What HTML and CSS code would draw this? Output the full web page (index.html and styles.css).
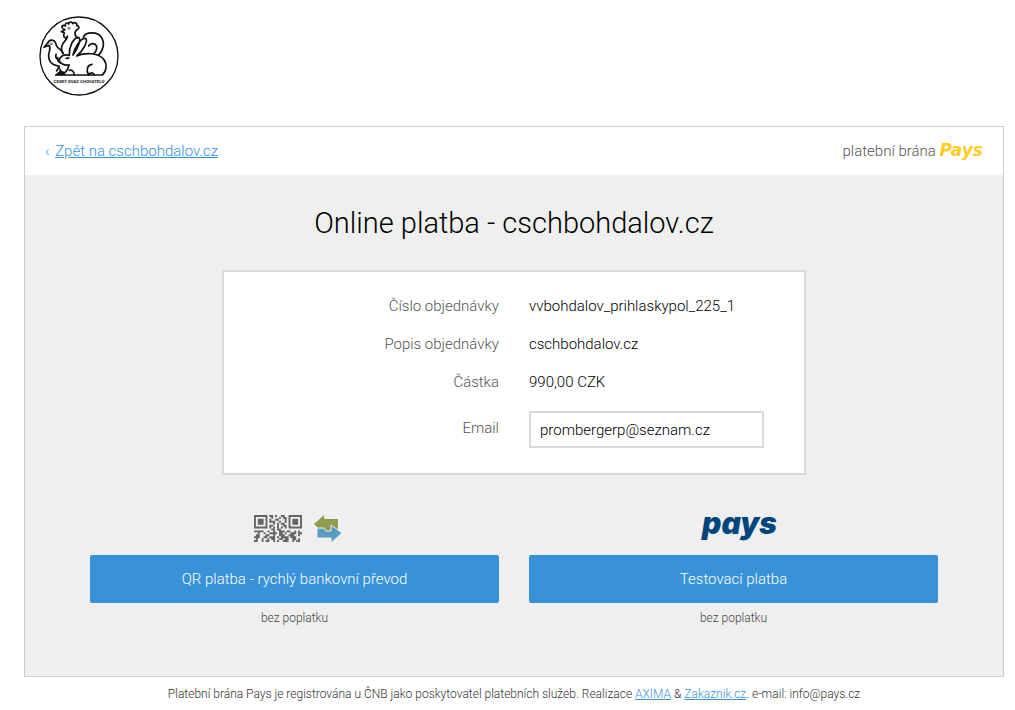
FILE: index.html
```html
<!DOCTYPE html>
<html lang="cs">

	<head>
		<meta charset="utf-8">
		<title>Online platba - cschbohdalov.cz</title>
		<link rel="stylesheet" href="styles.css">
	</head>

	<body>

		<header class="header">
			<svg class="logo" viewBox="27 24 240 240" role="img" aria-label="Český svaz chovatelů">
				<circle cx="147" cy="144" r="117" fill="#fff" stroke="#111" stroke-width="4" />
				<g fill="none" stroke="#111" stroke-width="5" stroke-linecap="round" stroke-linejoin="round">
					<!-- kohout -->
					<path d="M104 66l-10 5 9 3c-3 7-3 15 4 16 4 0 5-3 5-6 1 12-14 16-17 32-2 10 0 16 4 21" />
					<path d="M104 64c-10-1-10-11-4-12 4 0 6 2 6 2-2-8 5-12 10-6 0-7 10-8 13-1 5-6 14-1 11 6 7-1 9 6 4 10-4 3-8 5-9 10-1 9 2 13 7 17" />
					<path d="M160 88c6-18 44-18 54 0 12 18 5 41-9 54" />
					<path d="M176 114c8-12 26-8 24 8-1 7-4 11-8 14" />
					<!-- holub -->
					<path d="M54 104c3-9 18-11 22-1 3 8 2 13 10 18 6 4 11 8 14 14" />
					<path d="M53 105l-11 13 15-6c7 8 0 18-1 29-1 19 11 32 32 34l-8 14" />
					<path d="M78 139c-2 8 2 14 9 16M83 149c-1 9 3 14 10 16" />
					<!-- králík -->
					<path d="M118 142c-13-4-23 0-29 10-3 7 1 13 8 16 6 3 13 4 21 3" />
					<path d="M118 141c-2-22 12-53 27-53 11 2-2 35-16 53 3-19 22-51 37-50 11 3-6 38-26 53 27-12 67-9 81 10 12 16 8 37-4 47H77" />
					<path d="M116 172c-1 10-6 18-13 23M176 201c-9-14-4-31 10-32M176 200c7-8 16-6 17 1M118 187c9-2 15 5 14 13" />
				</g>
				<circle cx="117" cy="61" r="3" fill="none" stroke="#111" stroke-width="2" />
				<circle cx="64" cy="107" r="3" fill="none" stroke="#111" stroke-width="2" />
				<path d="M105 152q6-8 15-3-6 8-15 3z" fill="#111" />
				<path d="M88 176l7 12 10 4v10H74l14-12z" fill="#111" />
				<text class="logo-text" x="147" y="225" text-anchor="middle">ČESKÝ SVAZ CHOVATELŮ</text>
			</svg>
		</header>

		<main class="gate">
			<div class="topbar">
				<div class="back"><span>‹</span> <a href="#">Zpět na cschbohdalov.cz</a></div>
				<div class="brand">platební brána <strong>Pays</strong></div>
			</div>

			<section class="content">
				<h1>Online platba - cschbohdalov.cz</h1>

				<form class="order">
					<dl class="info">
						<dt>Číslo objednávky</dt>
						<dd>vvbohdalov_prihlaskypol_225_1</dd>
						<dt>Popis objednávky</dt>
						<dd>cschbohdalov.cz</dd>
						<dt>Částka</dt>
						<dd>990,00 CZK</dd>
					</dl>
					<div class="field">
						<label for="email">Email</label>
						<input type="email" id="email" value="prombergerp@seznam.cz">
					</div>
				</form>

				<div class="methods">
					<div class="method">
						<div class="icons">
							<svg class="qr" viewBox="0 0 25 14" preserveAspectRatio="none" aria-hidden="true">
								<g fill="none" stroke="#666" stroke-width="1">
									<path d="M.5.5h6v6h-6zM18.500.5h6v6h-6z" />
									<path d="M8 .5h2m1 0h1m2 0h2M9 1.500h1m3 0h1m1 0h2M8 2.500h1m2 0h2m3 0h1M8 3.500h3m2 0h1m2 0h1M10 4.500h1m1 0h1m1 0h2M8 5.500h2m2 0h1m2 0h2M8 6.500h1m1 0h1m1 0h1m1 0h1m1 0h1" />
									<path d="M9 7.500h2m1 0h2M0 8.500h5m2 0h1m2 0h1m2 0h3m1 0h2m2 0h1m1 0h1M2 9.500h1m2 0h1m2 0h4m1 0h2m1 0h1m2 0h3m1 0h2M1 10.500h2m3 0h2m2 0h1m2 0h3m2 0h3m2 0h1m1 0h1M0 11.500h3m2 0h2m1 0h3m1 0h1m1 0h4m1 0h3M1 12.500h1m2 0h1m2 0h1m1 0h2m2 0h2m1 0h2m2 0h2m1 0h1M0 13.500h2m2 0h1m1 0h2m2 0h1m1 0h1m2 0h3m2 0h1m1 0h2" />
								</g>
								<path d="M2 2h3v3H2zM20 2h3v3h-3z" fill="#666" />
							</svg>
							<svg class="transfer" viewBox="0 0 28 28" aria-hidden="true">
								<path d="M0 9l10-9v4h14v10h-3l-3-2v4h-8v3z" fill="#909b4c" />
								<path d="M3 13h7l2 3h5v-6l11 8-11 10v-5H3z" fill="#569dc1" stroke="#efefef" stroke-width="1" />
							</svg>
						</div>
						<button type="button">QR platba - rychlý bankovní převod</button>
						<p>bez poplatku</p>
					</div>
					<div class="method">
						<div class="icons"><strong class="pays">pays</strong></div>
						<button type="button">Testovací platba</button>
						<p>bez poplatku</p>
					</div>
				</div>
			</section>
		</main>

		<footer class="footer">
			Platební brána Pays je registrována u ČNB jako poskytovatel platebních služeb. Realizace <a href="#">AXIMA</a> &amp; <a href="#">Zakaznik.cz</a>. e-mail: info@pays.cz
		</footer>

	</body>

</html>
```
FILE: styles.css
```css
* {
	box-sizing: border-box;
}

body {
	margin: 0;
	padding: 16px 11px 0 24px;
	background: #fff;
	color: #000;
	font: 300 15px/18px Roboto, sans-serif;
}

a {
	color: #3792d9;
}

.header {
	padding: 0 15px 30px;
}

.logo {
	display: block;
	width: 80px;
	height: 80px;
}

.logo-text {
	font: bold 13px Roboto, sans-serif;
	fill: #111;
}

.gate {
	border: 1px solid #ccc;
	background: #efefef;
}

.topbar {
	display: flex;
	justify-content: space-between;
	align-items: center;
	height: 48px;
	padding: 0 20px;
	background: #fff;
	color: #555;
}

.back span {
	margin-right: 2px;
	color: #3792d9;
}

.brand strong {
	color: #fc2;
	font: italic bold 17px/16px "DejaVu Sans", sans-serif;
}

.content {
	padding: 30px 65px 49px;
}

h1 {
	margin: 0 0 29px;
	font-size: 29px;
	font-weight: 300;
	line-height: 36px;
	text-align: center;
}

.order {
	max-width: 584px;
	margin: 0 auto;
	padding: 25px 0;
	border: 2px solid #d9d9d9;
	background: #fff;
}

.info,
.field {
	display: grid;
	grid-template-columns: 1fr 1fr;
	column-gap: 30px;
}

.info {
	row-gap: 20px;
	margin: 0 0 20px;
}

.info dd {
	margin: 0;
}

.info dt,
.field label {
	color: #555;
	text-align: right;
}

.field label {
	padding-top: 8px;
}

.field input {
	width: 100%;
	max-width: 235px;
	height: 37px;
	padding: 0 9px;
	border: 2px solid #d9d9d9;
	background: #fff;
	color: #000;
	font: inherit;
}

.methods {
	display: grid;
	grid-template-columns: 1fr 1fr;
	gap: 30px;
	margin-top: 40px;
}

.method {
	text-align: center;
}

.icons {
	display: flex;
	justify-content: center;
	align-items: flex-start;
	gap: 12px;
	height: 28px;
	margin-bottom: 12px;
	padding-left: 6px;
}

.qr {
	width: 48px;
	height: 27px;
}

.transfer {
	width: 28px;
	height: 28px;
}

.pays {
	padding-left: 6px;
	color: #00457c;
	font: italic 900 30px/16px Inter, sans-serif;
}

.method button {
	width: 100%;
	height: 48px;
	border: 0;
	border-radius: 2px;
	background: #3792d9;
	color: #fff;
	font: inherit;
}

.method p {
	margin: 6px 0 0;
	color: #444;
	font-size: 12px;
}

.footer {
	padding: 8px 0;
	color: #333;
	font-size: 12px;
	text-align: center;
}
```
